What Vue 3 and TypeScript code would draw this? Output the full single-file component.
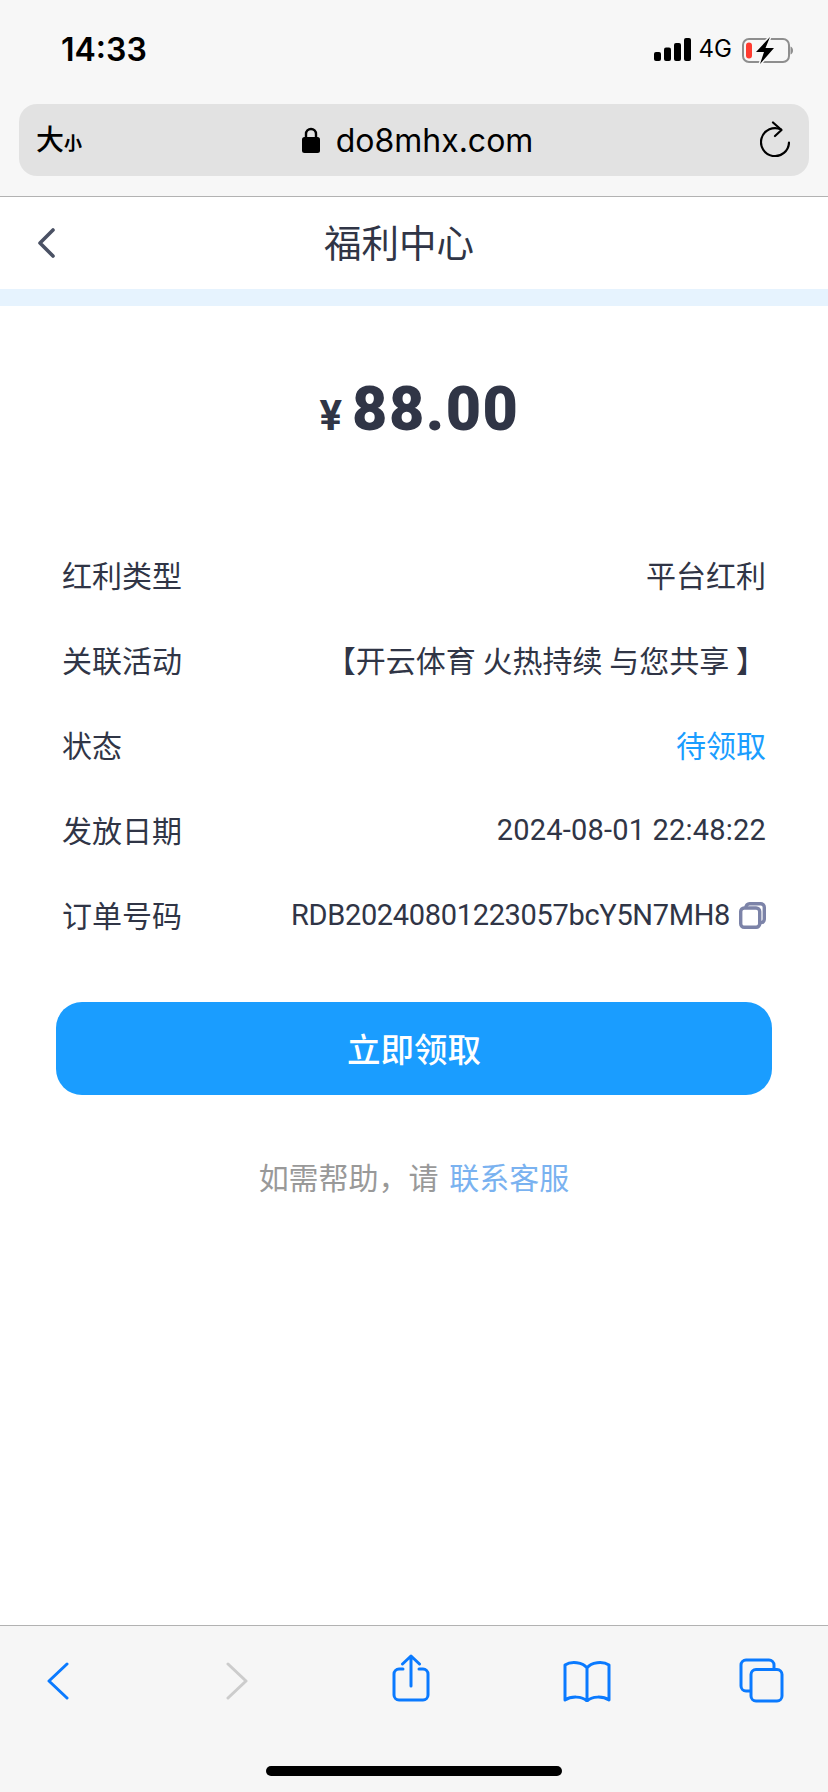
<script setup lang="ts">
interface Row {
  label: string
  value: string
  kind?: string
}
const rows: Row[] = [
  { label: '红利类型', value: '平台红利' },
  { label: '关联活动', value: '【开云体育 火热持续 与您共享 】' },
  { label: '状态', value: '待领取', kind: 'state' },
  { label: '发放日期', value: '2024-08-01 22:48:22', kind: 'num date' },
  { label: '订单号码', value: 'RDB20240801223057bcY5N7MH8', kind: 'num order' },
]
</script>

<template>
  <div class="phone">
    <header class="chrome">
      <div class="statusbar">
        <span class="time">14:33</span>
        <div class="indicators">
          <svg class="signal" width="37" height="23" viewBox="0 0 37 23" fill="#000">
            <rect x="0" y="14" width="7" height="9" rx="2" />
            <rect x="10" y="9.500" width="7" height="13.500" rx="2" />
            <rect x="20" y="5" width="7" height="18" rx="2" />
            <rect x="30" y="0" width="7" height="23" rx="2" />
          </svg>
          <span class="net">4G</span>
          <svg class="battery" width="53" height="27" viewBox="0 0 53 27">
            <rect x="2" y="2" width="46" height="23" rx="6" fill="none" stroke="#8e8e8e" stroke-width="2" />
            <path d="M49.500 9.500c1.500.5 2.500 2 2.500 4s-1 3.500-2.500 4z" fill="#8e8e8e" />
            <rect x="5" y="5.500" width="6" height="16" rx="3" fill="#ff3b30" />
            <path d="M29 0 15 15h8l-4 12 14-16h-8.500z" fill="#000" stroke="#f7f7f7" stroke-width="3" paint-order="stroke" stroke-linejoin="round" />
          </svg>
        </div>
      </div>
      <div class="url">
        <span class="aa">大<small>小</small></span>
        <div class="domain">
          <svg class="lock" width="18" height="26" viewBox="0 0 18 26">
            <path d="M4 11V7a5 5 0 0 1 10 0v4" fill="none" stroke="#000" stroke-width="2.400" />
            <rect x="0" y="10" width="18" height="16" rx="2.500" fill="#000" />
          </svg>
          <span>do8mhx.com</span>
        </div>
        <svg class="reload" width="30" height="36" viewBox="0 0 30 36" fill="none" stroke="#000" stroke-width="2.200" stroke-linecap="round" stroke-linejoin="round">
          <path d="M21 8.500A14 14 0 1 0 29 21.500" />
          <path d="M13 1.500 21.500 9 15 15" />
        </svg>
      </div>
    </header>

    <div class="navbar">
      <svg class="nav-back" width="18" height="30" viewBox="0 0 18 30" fill="none" stroke="#4a5164" stroke-width="3.600" stroke-linecap="round" stroke-linejoin="round">
        <path d="M16 2 3 15l13 13" />
      </svg>
      <h1 class="title">福利中心</h1>
    </div>
    <div class="band"></div>

    <main class="content">
      <div class="amount">
        <span class="yen">¥</span><span class="sum">88.00</span>
      </div>
      <dl class="rows">
        <div v-for="row in rows" :key="row.label" class="row">
          <dt>{{ row.label }}</dt>
          <dd :class="row.kind">
            <span>{{ row.value }}</span>
            <svg v-if="row.label === '订单号码'" class="copy" width="27" height="27" viewBox="0 0 27 27" fill="none" stroke="#7c83a8" stroke-width="3.400">
              <rect x="7" y="1.700" width="18.300" height="19" rx="3.500" />
              <rect x="1.700" y="6" width="19" height="19.300" rx="3.500" fill="#fff" />
            </svg>
          </dd>
        </div>
      </dl>
      <button class="claim" type="button">立即领取</button>
      <p class="help">如需帮助，请 <a>联系客服</a></p>
    </main>

    <footer class="toolbar">
      <div class="tools">
        <svg class="t-back" width="22" height="38" viewBox="0 0 22 38" fill="none" stroke="#0a7aff" stroke-width="3" stroke-linecap="round" stroke-linejoin="round">
          <path d="M20 2 2 19l18 17" />
        </svg>
        <svg class="t-fwd" width="22" height="38" viewBox="0 0 22 38" fill="none" stroke="#cccccc" stroke-width="3" stroke-linecap="round" stroke-linejoin="round">
          <path d="m2 2 18 17L2 36" />
        </svg>
        <svg class="t-share" width="38" height="48" viewBox="0 0 38 48" fill="none" stroke="#0a7aff" stroke-width="3" stroke-linecap="round" stroke-linejoin="round">
          <path d="M11 15H7a5 5 0 0 0-5 5v21a5 5 0 0 0 5 5h24a5 5 0 0 0 5-5V20a5 5 0 0 0-5-5h-4" />
          <path d="M19 32V2M10.500 10 19 2l8.500 8" />
        </svg>
        <svg class="t-book" width="48" height="42" viewBox="0 0 48 42" fill="none" stroke="#0a7aff" stroke-width="3" stroke-linecap="round" stroke-linejoin="round">
          <path d="M24 8C20 2 8 1 2 5v35c6-4 17-4 22 1 5-5 16-5 22-1V5C40 1 28 2 24 8zM24 8v33" />
        </svg>
        <svg class="t-tabs" width="45" height="45" viewBox="0 0 45 45" fill="none" stroke="#0a7aff" stroke-width="3" stroke-linejoin="round">
          <path d="M11 33H7a5 5 0 0 1-5-5V7a5 5 0 0 1 5-5h23a5 5 0 0 1 5 5v4" />
          <rect x="12" y="11.500" width="31" height="31.500" rx="5" />
        </svg>
      </div>
      <div class="home"></div>
    </footer>
  </div>
</template>

<style scoped>
.phone {
  width: 828px;
  height: 1792px;
  display: flex;
  flex-direction: column;
  background: #fff;
  font-family: "Noto Sans CJK SC", "Noto Sans", sans-serif;
  color: #303546;
  overflow: hidden;
}
.chrome {
  height: 197px;
  box-sizing: border-box;
  background: #f7f7f7;
  border-bottom: 1px solid #b2b2b2;
  padding: 0 19px;
}
.statusbar {
  height: 104px;
  display: flex;
  justify-content: space-between;
  padding: 0 15px 0 42px;
}
.time {
  margin-top: 28px;
  font: 600 32px/44px Inter, sans-serif;
  color: #000;
}
.indicators {
  display: flex;
  align-items: flex-start;
  padding-top: 37px;
}
.signal { margin-top: 1px; }
.net {
  margin: -3px 0 0 8px;
  font: 400 24px/29px Inter, sans-serif;
  color: #000;
}
.battery { margin-left: 9px; }
.url {
  height: 72px;
  border-radius: 18px;
  background: #e2e2e2;
  display: flex;
  align-items: center;
  justify-content: space-between;
  padding: 0 19px 0 17px;
  position: relative;
}
.aa {
  font-size: 28px;
  font-weight: 500;
  color: #000;
  line-height: 36px;
}
.aa small { font-size: 18px; font-weight: 700; }
.domain {
  display: flex;
  align-items: center;
  gap: 16px;
  margin-right: 7px;
  font: 400 32px/44px Inter, sans-serif;
  color: #000;
}
.domain span { padding-top: 1px; }
.reload { margin-top: -2px; }
.navbar {
  height: 92px;
  flex: none;
  box-sizing: border-box;
  position: relative;
  display: flex;
  align-items: center;
  justify-content: center;
  padding: 0 30px 4px 0;
}
.nav-back {
  position: absolute;
  left: 37px;
  top: 31px;
}
.title {
  margin: 0;
  font-size: 37.500px;
  font-weight: 400;
  line-height: 50px;
}
.band {
  height: 17px;
  flex: none;
  background: #e6f3fe;
}
.content {
  flex: 1;
  display: flex;
  flex-direction: column;
  align-items: stretch;
  padding: 0 56px;
}
.amount {
  display: flex;
  justify-content: center;
  align-items: baseline;
  margin-top: 61px;
  padding-left: 11px;
  height: 84px;
  line-height: 84px;
  font-family: Roboto, sans-serif;
  font-weight: 900;
}
.yen {
  font-size: 42px;
  font-weight: 700;
  margin-right: 10px;
}
.sum {
  font-size: 61px;
  letter-spacing: 1.500px;
}
.rows {
  margin: 80px 0 0;
  padding: 0 6px;
}
.row {
  height: 85px;
  display: flex;
  justify-content: space-between;
  align-items: center;
  font-size: 30px;
  line-height: 40px;
}
dt { color: #303546; }
dd {
  margin: 0;
  display: flex;
  align-items: center;
}
.state { color: #1a9dff; }
.num {
  font-family: Roboto, sans-serif;
  font-size: 29px;
  padding-top: 2px;
}
.date { letter-spacing: .2px; }
.order { letter-spacing: -.33px; }
.copy { margin-left: 9px; margin-top: 1px; }
.claim {
  margin-top: 46px;
  height: 93px;
  flex: none;
  border: 0;
  border-radius: 26px;
  background: #1a9dff;
  color: #fff;
  padding: 0 0 2px;
  font: 500 33.500px/44px "Noto Sans CJK SC", sans-serif;
}
.help {
  margin: 61px 0 0;
  text-align: center;
  font-size: 30px;
  line-height: 40px;
  word-spacing: 4px;
  color: #999;
}
.help a { color: #7ab2f0; }
.toolbar {
  height: 167px;
  flex: none;
  box-sizing: border-box;
  background: #f6f6f6;
  border-top: 1px solid #b2b2b2;
  position: relative;
}
.tools {
  display: flex;
  align-items: flex-start;
}
.t-back { margin: 36px 0 0 47px; }
.t-fwd { margin: 36px 0 0 157px; }
.t-share { margin: 28px 0 0 144px; }
.t-book { margin: 34px 0 0 133px; }
.t-tabs { margin: 32px 0 0 128px; }
.home {
  position: absolute;
  left: 266px;
  bottom: 16px;
  width: 296px;
  height: 10px;
  border-radius: 5px;
  background: #000;
}
</style>
